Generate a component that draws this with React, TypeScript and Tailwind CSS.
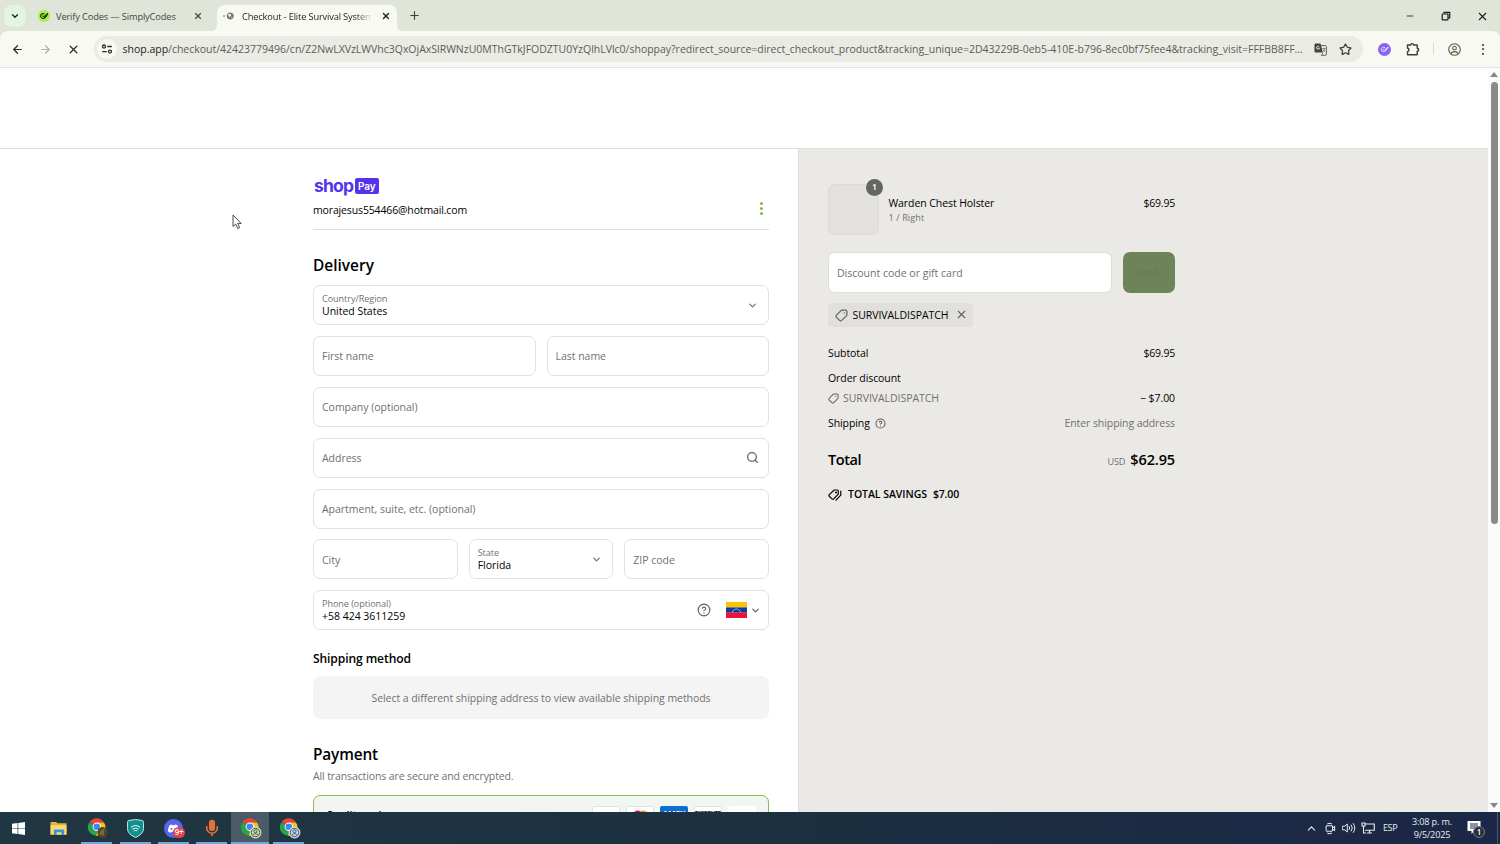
import React from "react";
import { ChevronDown, Search, X, Plus, Minus, ArrowLeft, ArrowRight, Star, CircleHelp, ChevronUp, Mic } from "lucide-react";

const URL_PATH =
  "/checkout/42423779496/cn/Z2NwLXVzLWVhc3QxOjAxSlRWNzU0MThGTkJFODZTU0YzQlhLVlc0/shoppay?redirect_source=direct_checkout_product&tracking_unique=2D43229B-0eb5-410E-b796-8ec0bf75fee4&tracking_visit=FFFBB8FF...";

function CodesMark({ className }: { className: string }) {
  return (
    <svg viewBox="0 0 12 12" className={className}>
      <circle cx="6" cy="6" r="6" fill="currentColor" />
      <g fill="none" stroke="#1c3a10" strokeWidth="1.1" strokeLinecap="round" strokeLinejoin="round">
        <path d="M6.2 3.9C4.2 3 2.4 4.3 2.6 6.2c.2 2 2.7 2.9 4.4 1.4L9.6 3.6" />
        <path d="M4.6 6 6 6.6 9.6 3.6 8.2 6.6 6.6 7.8" />
      </g>
    </svg>
  );
}

function TabStrip() {
  return (
    <div className="flex h-[31px] items-start bg-[#dfe5d9] text-[9.3px] text-[#43473f]">
      <div className="ml-1 mt-[5px] flex size-[22px] items-center justify-center rounded-lg bg-[#e3f5df]">
        <ChevronDown size={10} strokeWidth={3} className="text-[#1d211b]" />
      </div>
      <div className="flex h-8 w-[174px] shrink-0 items-center pl-3">
        <CodesMark className="size-3 shrink-0 text-[#a4f04a]" />
        <span className="ml-[6px] w-[138px] shrink-0 whitespace-nowrap pt-px tracking-[-0.15px]">Verify Codes — SimplyCodes</span>
        <X size={10} strokeWidth={2.8} className="ml-[-1px] shrink-0" />
      </div>
      <div className="mt-[5px] ml-[-1px] flex h-[26px] w-[198px] items-start">
        <svg viewBox="0 0 6 26" className="ml-[12px] h-[26px] w-[6px] shrink-0">
          <path d="M0 26Q6 26 6 20V26Z" fill="#f9f9f3" />
        </svg>
        <div className="flex h-[26px] w-[180px] shrink-0 items-center rounded-t-lg bg-[#f9f9f3] pb-[4px] text-[#1d211b]">
          <svg viewBox="0 0 12 12" className="ml-[5px] size-3 shrink-0">
            <circle cx="2" cy="6" r=".8" fill="#555" />
            <circle cx="8.2" cy="6" r="3.1" fill="#777" stroke="#666" strokeWidth=".8" />
            <path d="M6.2 4.6 8.3 4l.5 1.5-1.6 1.2ZM8.6 7.7l1.7-1" fill="#f5f5f0" stroke="#f5f5f0" strokeWidth=".6" />
          </svg>
          <span className="ml-[8px] w-[130px] overflow-hidden whitespace-nowrap pt-px tracking-[-0.17px] [mask-image:linear-gradient(to_right,black_88%,transparent)]">
            Checkout - Elite Survival System
          </span>
          <X size={10} strokeWidth={3.2} className="ml-[9px] shrink-0" />
        </div>
        <svg viewBox="0 0 6 26" className="h-[26px] w-[6px] shrink-0">
          <path d="M6 26Q0 26 0 20V26Z" fill="#f9f9f3" />
        </svg>
      </div>
      <Plus size={13} strokeWidth={2.2} className="ml-[11px] mt-[9px]" />
      <div className="ml-auto flex h-8 items-center text-[#1b1d1a]">
        <Minus size={10} strokeWidth={2} />
        <svg viewBox="0 0 10 10" className="ml-[26px] size-[10px]" fill="none" stroke="currentColor" strokeWidth="1.2">
          <rect x="1.2" y="3" width="5.8" height="5.8" rx=".6" />
          <path d="M3 2.6V1.3h5.7v5.6H7.3" />
        </svg>
        <X size={13} strokeWidth={2} className="ml-[25px] mr-[11px]" />
      </div>
    </div>
  );
}

function Toolbar() {
  return (
    <div className="bg-[#dfe5d9]">
      <div className="flex h-[37px] items-center rounded-t-lg border-b border-[#e3e4de] bg-[#f9f9f3] text-[#454941]">
        <ArrowLeft size={13} strokeWidth={2.3} className="ml-[11px] text-[#2b2f28]" />
        <ArrowRight size={13} strokeWidth={2.2} className="ml-[15px] text-[#b0b3ab]" />
        <X size={13} strokeWidth={2.4} className="ml-[15px] text-[#2b2f28]" />
        <div className="ml-[14px] flex h-[26px] w-[1269px] items-center rounded-full bg-[#eaebe5] pl-[3px]">
          <div className="flex size-5 shrink-0 items-center justify-center rounded-full bg-[#f9f9f3]">
            <svg viewBox="0 0 12 12" className="size-3" fill="none" stroke="#2b2f28" strokeWidth="1.3">
              <circle cx="3" cy="3.5" r="1.5" />
              <path d="M6.3 3.5h4.5M1.2 8.6h4.5" />
              <circle cx="9" cy="8.6" r="1.5" />
            </svg>
          </div>
          <span className="ml-[5.5px] w-[1191.5px] whitespace-nowrap pt-[1.5px] text-[10.5px] tracking-[-0.009px] text-[#5a5e56]">
            <span className="text-[#23261f]">shop.app</span>
            {URL_PATH}
          </span>
          <svg viewBox="0 0 13 13" className="size-[13px] shrink-0">
            <path d="M1 .5h5.5L8.8 9.5H1.8A1.3 1.3 0 0 1 .5 8.2V1.8Z" fill="#3f433c" />
            <path d="M7 2.6h4.6a.8.8 0 0 1 .8.8v8.1a.8.8 0 0 1-.8.8H7.3L9 9.9" fill="none" stroke="#5e625a" />
            <path d="M5.3 3.9a1.5 1.5 0 1 0 .2 1.3H4.2" fill="none" stroke="#f0f0ea" strokeWidth=".9" />
            <path d="M8.3 5.5h3M9.8 4.7v.8M11 5.5c-.3 1.5-1.2 2.5-2 3M8.9 6.5l2.2 2.5" fill="none" stroke="#5e625a" strokeWidth=".7" />
          </svg>
          <Star size={13} strokeWidth={2.3} className="ml-[12px] shrink-0 text-[#3b3f38]" />
        </div>
        <svg viewBox="0 0 13 13" className="ml-[15px] size-[13px]">
          <circle cx="6.5" cy="6.5" r="6.5" fill="#8a63f2" />
          <g fill="none" stroke="#e9e0ff" strokeWidth="1" strokeLinecap="round">
            <path d="M6.7 4.5C4.6 3.7 3 5 3.2 6.6c.2 2 2.7 2.7 4.3 1.4l2.6-3.7" />
            <path d="M5 6.5 6.5 7 10 4.3" />
          </g>
        </svg>
        <svg viewBox="0 0 14 14" className="ml-[15px] size-[14px]" fill="none" stroke="#3b3f38" strokeWidth="1.4" strokeLinejoin="round">
          <path d="M1.5 3h3.3a1.4 1.4 0 0 1 2.8 0h3.6v3.2a1.5 1.5 0 0 1 0 3v3.5H1.5V9.7a1.9 1.9 0 0 0 0-3.7Z" />
        </svg>
        <div className="ml-[13px] h-3 w-px bg-[#d5dbcb]" />
        <svg viewBox="0 0 14 14" className="ml-[14px] size-[13px]" fill="none" stroke="#4c6340" strokeWidth="1.2">
          <circle cx="7" cy="7" r="6.2" />
          <circle cx="7" cy="5.5" r="2" />
          <path d="M3 11.5c1.5-3 6.5-3 8 0" />
        </svg>
        <div className="ml-[20.5px] flex flex-col gap-[2.5px]">
          <i className="block size-[2px] rounded-full bg-[#33372f]" />
          <i className="block size-[2px] rounded-full bg-[#33372f]" />
          <i className="block size-[2px] rounded-full bg-[#33372f]" />
        </div>
      </div>
    </div>
  );
}

function Field({ label, value, className = "", children }: { label: string; value?: string; className?: string; children?: React.ReactNode }) {
  return (
    <div className={`flex h-10 items-center rounded-[7px] border border-[#e1e1e1] bg-white px-[8px] ${className}`}>
      {value ? (
        <div className="flex grow flex-col">
          <span className="text-[9.1px] leading-[12px] tracking-[-0.06px] text-[#707070]">{label}</span>
          <span className="text-[10.5px] leading-[13px] tracking-[-0.02px] text-black">{value}</span>
        </div>
      ) : (
        <span className="grow pt-[2px] text-[10.5px] tracking-[-0.02px] text-[#707070]">{label}</span>
      )}
      {children}
    </div>
  );
}

function ShopPayLogo() {
  return (
    <div className="flex h-[16px] items-center text-[#5433eb]">
      <span className="w-[41.5px] pb-[1px] pl-px text-[17.5px] leading-[14px] font-bold tracking-[-0.8px] font-['Inter',sans-serif]">shop</span>
      <span className="flex h-[16px] w-[24.5px] items-center justify-center rounded-[2px] bg-[#5433eb] text-[10px] font-semibold tracking-[-0.1px] text-white font-['Inter',sans-serif]">
        Pay
      </span>
    </div>
  );
}

function VenezuelaFlag() {
  return (
    <svg viewBox="0 0 21 16" className="h-[16px] w-[21px]">
      <rect width="21" height="5.4" fill="#fcc400" />
      <rect y="5.4" width="21" height="5.3" fill="#123a9c" />
      <rect y="10.7" width="21" height="5.3" fill="#ee1237" />
      <path d="M6.5 10.2A4.1 4.1 0 0 1 14.5 10.2" fill="none" stroke="#fff" strokeWidth="1" strokeDasharray="1 .7" />
    </svg>
  );
}

function Delivery() {
  return (
    <main className="flex w-[798px] shrink-0 flex-col items-end bg-white pr-[29px]">
      <div className="w-[456px]">
        <div className="pt-[29px]">
          <ShopPayLogo />
        </div>
        <div className="flex h-[36px] items-start justify-between border-b border-[#dedede]">
          <span className="pt-[8px] text-[10.5px] leading-[16px] tracking-[-0.14px]">morajesus554466@hotmail.com</span>
          <div className="mr-[6px] mt-[8px] flex flex-col gap-[2px]">
            <i className="block size-[3px] rounded-full bg-[#7cbb3f]" />
            <i className="block size-[3px] rounded-full bg-[#7cbb3f]" />
            <i className="block size-[3px] rounded-full bg-[#7cbb3f]" />
          </div>
        </div>
        <h2 className="mt-[26px] text-[15.4px] leading-[20px] font-semibold tracking-[0.03px]">Delivery</h2>
        <div className="mt-[9.4px] grid grid-cols-6 gap-x-[11px] gap-y-[10.8px]">
          <Field label="Country/Region" value="United States" className="col-span-6">
            <ChevronDown size={11} strokeWidth={2.6} className="mr-[2px] text-[#707070]" />
          </Field>
          <Field label="First name" className="col-span-3" />
          <Field label="Last name" className="col-span-3" />
          <Field label="Company (optional)" className="col-span-6" />
          <Field label="Address" className="col-span-6">
            <Search size={13} strokeWidth={2.3} className="mr-[1px] mb-px text-[#606060]" />
          </Field>
          <Field label="Apartment, suite, etc. (optional)" className="col-span-6" />
          <Field label="City" className="col-span-2" />
          <Field label="State" value="Florida" className="col-span-2">
            <ChevronDown size={11} strokeWidth={2.6} className="mr-[2px] text-[#707070]" />
          </Field>
          <Field label="ZIP code" className="col-span-2" />
          <Field label="Phone (optional)" value="+58 424 3611259" className="col-span-6">
            <CircleHelp size={14} strokeWidth={1.9} className="mr-[15px] text-[#606060]" />
            <VenezuelaFlag />
            <ChevronDown size={11} strokeWidth={2.6} className="ml-[3px] mr-[-1px] text-[#606060]" />
          </Field>
        </div>
        <h3 className="mt-[20.6px] text-[12.1px] leading-[16px] font-semibold tracking-[-0.11px]">Shipping method</h3>
        <div className="mt-[9.5px] flex h-[43px] items-center justify-center rounded-[7px] bg-[#f4f4f4] pt-[2px] text-[10.5px] tracking-[-0.05px] text-[#707070]">
          Select a different shipping address to view available shipping methods
        </div>
        <h2 className="mt-[26px] text-[15.4px] leading-[20px] font-semibold tracking-[-0.15px]">Payment</h2>
        <p className="mt-[2.5px] text-[10.5px] leading-[16px] tracking-[-0.115px] text-[#707070]">All transactions are secure and encrypted.</p>
        <div className="mt-[11px] flex h-[41px] items-center rounded-[7px] border border-[#86be50] bg-[#f1f6f0] px-[12px]">
          <span className="grow pt-[2px] text-[10.5px] font-semibold tracking-[-0.05px]">Credit card</span>
          <div className="flex gap-[6px] text-[8px] font-bold">
            <div className="flex h-[18px] w-[28px] items-center justify-center rounded-[2px] border border-[#e2e2e2] bg-white pb-[2px] text-[9px] text-[#1a2a78] italic">VISA</div>
            <div className="flex h-[18px] w-[28px] items-center justify-center rounded-[2px] border border-[#e2e2e2] bg-white">
              <svg viewBox="0 0 18 12" className="h-[11px] w-[17px]">
                <circle cx="6" cy="6" r="5.5" fill="#e11b22" />
                <circle cx="12" cy="6" r="5.5" fill="#f59a1e" />
              </svg>
            </div>
            <div className="flex h-[18px] w-[28px] items-center justify-center rounded-[2px] bg-[#0b6fcf] pb-[2px] text-white">AMEX</div>
            <div className="flex h-[18px] w-[28px] items-start justify-center rounded-[2px] border border-[#e2e2e2] bg-white pt-[1.5px] text-[6px] leading-[9px] tracking-[-0.4px]">DISCOVER</div>
            <div className="h-[18px] w-[28px] rounded-[2px] bg-white" />
          </div>
        </div>
      </div>
    </main>
  );
}

function Row({ label, value }: { label: React.ReactNode; value: React.ReactNode }) {
  return (
    <div className="flex h-[16px] items-center justify-between whitespace-nowrap">
      <span className="flex items-center">{label}</span>
      <span className="flex items-baseline">{value}</span>
    </div>
  );
}

function TagIcon({ className }: { className: string }) {
  return (
    <svg viewBox="0 0 13 13" className={className} fill="none" stroke="currentColor" strokeWidth="1.2" strokeLinejoin="round">
      <path d="M7.2 1.2h3.4c.8 0 1.3.5 1.3 1.3v3.2c0 .5-.2.8-.5 1.1l-4.700 4.600a1.500 1.500 0 0 1-2.100 0L1.500 8.300a1.500 1.500 0 0 1 0-2.100L6 1.700c.3-.3.700-.5 1.200-.5Z" />
      <circle cx="9.200" cy="3.900" r=".7" fill="currentColor" stroke="none" />
    </svg>
  );
}

function DoubleTag() {
  return (
    <svg viewBox="0 0 14 12" className="h-[12px] w-[14px]" fill="none" stroke="currentColor" strokeWidth="1.2" strokeLinejoin="round" strokeLinecap="round">
      <path d="M6.2 1h3c.7 0 1.1.4 1.1 1.1v3L5.7 9.9a1.2 1.2 0 0 1-1.7 0L1.3 7.3a1.2 1.2 0 0 1 0-1.7Z" />
      <path d="M12.8 2.2v4L8 11.2" />
      <circle cx="8" cy="3.4" r=".4" fill="currentColor" />
    </svg>
  );
}

function Summary() {
  return (
    <aside className="flex grow flex-col border-l border-[#dedede] bg-[#ebe9e5] pl-[29px] text-[10.5px] tracking-[-0.08px]">
      <div className="w-[347px]">
        <div className="mt-[34px] flex h-[52px] items-center">
          <div className="relative size-[51px] rounded-[7px] border border-[#dcdbd7] bg-[#e2e1dd]">
            <span className="absolute -top-[6px] -right-[5px] flex size-[17px] items-center justify-center rounded-full bg-[#646462] text-[9.5px] font-semibold text-white">1</span>
          </div>
          <div className="ml-[9.5px] flex grow items-start justify-between pt-[1px]">
            <div>
              <div className="leading-[16px]">Warden Chest Holster</div>
              <div className="text-[9.1px] leading-[14px] tracking-[0.1px] text-[#707070]">1 / Right</div>
            </div>
            <span className="leading-[16px] tracking-[-0.21px]">$69.95</span>
          </div>
        </div>
        <div className="mt-[17px] flex gap-[11px]">
          <div className="flex h-[40.5px] w-[284px] items-center rounded-[7px] border border-[#dedede] bg-white px-[8px] pt-[2.5px] tracking-[0px] text-[#707070]">
            Discount code or gift card
          </div>
          <button className="h-[40.5px] grow rounded-[7px] bg-[#6d8459] text-[9.5px] font-semibold text-[#667a58]">Apply</button>
        </div>
        <div className="mt-[10.5px] flex h-[24px] w-[145px] items-center rounded-[4px] bg-[#e1e0dc] pl-[7px]">
          <TagIcon className="size-[13px] text-[#606060]" />
          <span className="ml-[4.5px] mr-[6px] pt-[1.5px] tracking-[-0.055px]">SURVIVALDISPATCH</span>
          <X size={13} strokeWidth={2.1} className="mb-px text-[#606060]" />
        </div>
        <div className="mt-[19px] flex flex-col">
          <Row label="Subtotal" value={<span className="tracking-[-0.21px]">$69.95</span>} />
          <div className="mt-[9px]"><Row label="Order discount" value="" /></div>
          <div className="mt-[4px]">
            <Row
              label={<><TagIcon className="mr-[4px] mb-[2px] size-[11px] text-[#606060]" /><span className="tracking-[-0.055px] text-[#707070]">SURVIVALDISPATCH</span></>}
              value="− $7.00"
            />
          </div>
          <div className="mt-[9px]">
            <Row
              label={<>Shipping<CircleHelp size={11} strokeWidth={2.2} className="mb-[2px] ml-[5px] text-[#606060]" /></>}
              value={<span className="text-[#707070]">Enter shipping address</span>}
            />
          </div>
          <div className="mt-[19.5px]">
            <Row
              label={<span className="text-[14.5px] font-semibold tracking-[-0.45px]">Total</span>}
              value={<><span className="mr-[5px] text-[9.1px] tracking-[-0.1px] text-[#707070]">USD</span><span className="text-[14.5px] font-semibold tracking-[-0.13px]">$62.95</span></>}
            />
          </div>
          <div className="mt-[19.5px] flex h-[16px] items-center font-semibold">
            <DoubleTag />
            <span className="ml-[6px] tracking-[-0.05px]">TOTAL SAVINGS</span>
            <span className="ml-[6px] tracking-[-0.16px]">$7.00</span>
          </div>
        </div>
      </div>
    </aside>
  );
}

function ScrollBar() {
  return (
    <div className="flex w-[12px] shrink-0 flex-col items-center bg-[#fbfbfb] pt-[4px] pb-[4px]">
      <svg viewBox="0 0 8 5" className="h-[5px] w-[8px]"><path d="M4 0 8 5H0Z" fill="#868686" /></svg>
      <div className="mt-[5px] h-[442px] w-[7px] rounded-full bg-[#8b8b8b]" />
      <svg viewBox="0 0 8 5" className="mt-auto h-[5px] w-[8px]"><path d="M4 5 8 0H0Z" fill="#868686" /></svg>
    </div>
  );
}

function ChromeIcon({ badge }: { badge: "photo" | "green" | "blue" }) {
  return (
    <svg viewBox="0 0 22 22" className="size-[22px]">
      <path d="M9.5 9.5 2.5 5A8.5 8.5 0 0 1 17 5.5H9.5Z" fill="#e94335" />
      <path d="M2.3 5.2A8.5 8.5 0 0 0 8.5 18.5L12.3 12 9.5 9.5Z" fill="#2ba24c" />
      <path d="M10 5.5H17A8.5 8.5 0 0 1 8.5 18.5L13 11Z" fill="#fbc116" />
      <circle cx="9.8" cy="9.8" r="4.2" fill="#fff" />
      <circle cx="9.8" cy="9.8" r="3.3" fill="#4285f4" />
      {badge === "photo" ? (
        <g>
          <ellipse cx="15.5" cy="15.5" rx="5" ry="5.5" fill="#4c4527" />
          <path d="M12.5 17c1-4 3-5 5-5l-1 7Z" fill="#7f6a35" />
        </g>
      ) : (
        <g fill={badge === "green" ? "#c8dcb4" : "#c5d5e6"} stroke={badge === "green" ? "#405536" : "#3b5068"} strokeWidth=".9">
          <circle cx="15.5" cy="15.5" r="5.5" stroke={badge === "green" ? "#dbe8ce" : "#d5e0ec"} />
          <circle cx="15.5" cy="15.5" r="4.2" />
          <circle cx="15.5" cy="14.3" r="1.5" />
          <path d="M12.8 18.2c1-2 4.4-2 5.4 0" fill="none" />
        </g>
      )}
    </svg>
  );
}

function TaskItem({ children, running = false, active = false }: { children: React.ReactNode; running?: boolean; active?: boolean }) {
  return (
    <div className={`flex h-full w-[38.4px] flex-col items-center ${active ? "bg-[#4a5b66]" : ""}`}>
      <div className="flex grow items-center justify-center pt-[2px]">{children}</div>
      <div className={`h-[2px] ${active ? "w-full" : "w-[31px]"} ${running ? "bg-[#6ea9dc]" : ""}`} />
    </div>
  );
}

function Taskbar() {
  return (
    <footer className="flex h-[32px] shrink-0 items-center bg-linear-to-r from-[#203743] via-[#1c3040] to-[#1b2746] pl-[0.7px] text-[#e8ecf0]">
      <TaskItem>
        <svg viewBox="0 0 14 14" className="mr-[3px] size-[13px]" fill="#fff"><path d="M0 2l6-.9v5.5H0ZM6.7 1 14 0v6.6H6.7ZM0 7.3h6v5.5L0 12ZM6.7 7.3H14V14l-7.3-1Z" /></svg>
      </TaskItem>
      <TaskItem>
        <svg viewBox="0 0 18 16" className="ml-[1px] h-[15px] w-[18px]">
          <path d="M0 1h6l1.5 1.5H17V15H0Z" fill="#e8b23d" />
          <path d="M0 4.5h17V14H0Z" fill="#fbd974" />
          <path d="M3.5 9h11v6h-3v-3H6.5v3h-3Z" fill="#3d93d8" />
        </svg>
      </TaskItem>
      <TaskItem running><div className="ml-[3px]"><ChromeIcon badge="photo" /></div></TaskItem>
      <TaskItem running>
        <svg viewBox="0 0 18 20" className="h-[19px] w-[17px]">
          <path d="M2 1.5Q9-.5 16 1.5q1.5.3 1.5 2V10q0 6-8.5 9.5Q.5 16 .5 10V3.5Q.5 1.8 2 1.5Z" fill="#12908f" stroke="#c9eeee" strokeWidth="1" />
          <g fill="none" stroke="#fff" strokeWidth="1" strokeLinecap="round"><path d="M4.5 8.5q4.5-3.5 9 0M6 10.5q3-2.2 6 0M7.6 12.3q1.4-1 2.8 0" /></g>
        </svg>
      </TaskItem>
      <TaskItem running>
        <div className="relative size-[19px]">
          <svg viewBox="0 0 19 19" className="size-[19px]">
            <circle cx="9.5" cy="9.5" r="9.5" fill="#5865f2" />
            <path d="M4 12.5q0-5 2-6.5l2-.6.6.8h1.8l.6-.8 2 .6q2 2 2 6.5l-2.500 1.500-.8-1.300H7.300L6.500 14Z" fill="#fff" />
            <circle cx="7.5" cy="10" r="1" fill="#5865f2" /><circle cx="11.5" cy="10" r="1" fill="#5865f2" />
          </svg>
          <span className="absolute top-[8px] left-[9px] flex h-[11px] w-[12px] items-center justify-center rounded-full bg-[#e0434b] text-[8px] font-semibold tracking-[-0.3px] text-white">9+</span>
        </div>
      </TaskItem>
      <TaskItem running><Mic size={18} strokeWidth={2.2} className="text-[#e8703a] [&>rect]:fill-[#e8703a]" /></TaskItem>
      <TaskItem running active><div className="ml-[2px]"><ChromeIcon badge="green" /></div></TaskItem>
      <TaskItem running><div className="ml-[3px]"><ChromeIcon badge="blue" /></div></TaskItem>
      <div className="ml-auto flex h-full items-center">
        <ChevronUp size={13} strokeWidth={2} />
        <svg viewBox="0 0 12 14" className="ml-[7px] h-[13px] w-[11px]" fill="none" stroke="currentColor" strokeWidth="1.1">
          <path d="M2.5 2.2Q5 .3 7.5 2.2M2.5 11.8q2.5 1.9 5 0" /><rect x="1.2" y="4" width="7" height="6" rx="1" /><path d="m8.2 6.2 2.300-1.300v4.200L8.200 7.800" />
        </svg>
        <svg viewBox="0 0 14 12" className="ml-[6px] h-[12px] w-[14px]" fill="none" stroke="currentColor" strokeWidth="1" strokeLinecap="round">
          <path d="M.7 4.2h2L5.3 2v8L2.7 7.8h-2ZM7.3 4.5q1 1.5 0 3M9.3 3q2.2 3 0 6M11.3 1.5q3.2 4.5 0 9" />
        </svg>
        <svg viewBox="0 0 14 12" className="ml-[5px] h-[12px] w-[14px]" fill="none" stroke="currentColor" strokeWidth="1.1">
          <path d="M4.5 2h8.8v6.3H4M6 11h5M8.5 8.3V11M1 1h3v3H1ZM2.5 4v7H5" />
        </svg>
        <span className="ml-[8px] w-[15px] text-[9px] tracking-[-0.4px]">ESP</span>
        <div className="ml-[13px] flex w-[42px] flex-col items-center text-[9.1px] leading-[13.5px] tracking-[-0.15px] whitespace-nowrap">
          <span>3:08 p. m.</span>
          <span>9/5/2025</span>
        </div>
        <div className="relative ml-[14px] mr-[15px] h-[14px] w-[15px]">
          <svg viewBox="0 0 14 14" className="size-[14px]"><path d="M.5 0h13v10H7L4.5 13V10h-4Z" fill="#fff" /><path d="M3 3h8M3 5h8M3 7h6" stroke="#1b2746" /></svg>
          <span className="absolute top-[5px] left-[6px] flex size-[12px] items-center justify-center rounded-full border border-[#777e8c] bg-[#272d3a] text-[8px] font-semibold text-white">1</span>
        </div>
        <div className="mr-[2px] h-full w-px bg-[#4b566c]" />
      </div>
    </footer>
  );
}

function Cursor() {
  return (
    <svg viewBox="0 0 10 16" className="absolute top-[214px] left-[232px] h-[16px] w-[10px]">
      <path d="M1 1v11.5l2.7-2.4 2 4.4 2-.9-2-4.2h3.5Z" fill="#fff" stroke="#333" strokeWidth=".9" strokeLinejoin="round" />
    </svg>
  );
}

export default function App() {
  return (
    <div className="relative flex h-[844px] w-[1500px] flex-col overflow-hidden bg-white text-black font-['Open_Sans','Noto_Sans',sans-serif]">
      <TabStrip />
      <Toolbar />
      <div className="flex h-[744px] shrink-0 overflow-hidden">
        <div className="flex w-[1488px] flex-col">
          <header className="h-[81px] shrink-0 border-b border-[#dedede] bg-white" />
          <div className="flex min-h-0 grow">
            <Delivery />
            <Summary />
          </div>
        </div>
        <ScrollBar />
      </div>
      <Taskbar />
      <Cursor />
    </div>
  );
}
